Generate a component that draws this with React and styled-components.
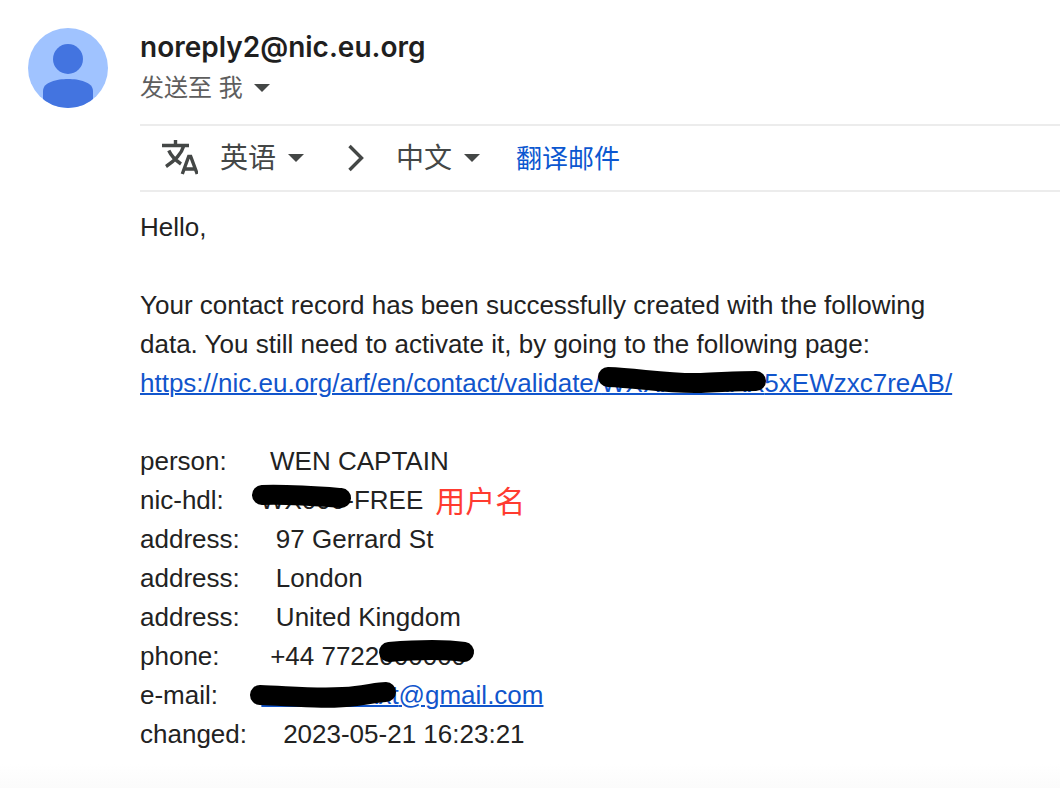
import React from "react";
import styled, { createGlobalStyle } from "styled-components";

const GlobalStyle = createGlobalStyle`
  * { box-sizing: border-box; }
  body {
    margin: 0;
    background: #fff;
    font-family: "Liberation Sans", "Noto Sans CJK SC", sans-serif;
  }
`;

const Message = styled.main`
  display: flex;
  gap: 32px;
  align-items: flex-start;
  min-height: 100vh;
  padding: 28px 0 32px 28px;
  background: linear-gradient(to top, #fbfbfb, #fff 24px);
`;

const Avatar = styled.svg`
  flex: none;
  width: 80px;
  height: 80px;
`;

const Content = styled.article`
  flex: 1;
  min-width: 0;
`;

const Header = styled.header`
  display: flex;
  flex-direction: column;
  align-items: flex-start;
  height: 96px;
`;

const Sender = styled.h1`
  margin: 0;
  font: 600 28px/38px Inter, sans-serif;
  color: #1f1f1f;
`;

const RecipientButton = styled.button`
  display: flex;
  align-items: center;
  gap: 11px;
  padding: 0;
  border: 0;
  background: none;
  color: #5e5e5e;
  font: 24px/44px "Liberation Sans", "Noto Sans CJK SC", sans-serif;
`;

const Caret = styled.svg`
  flex: none;
  width: 16px;
  height: 8px;
  fill: #444746;
`;

const TranslateBar = styled.section`
  display: flex;
  align-items: center;
  height: 68px;
  padding-left: 22px;
  border-top: 2px solid #ececec;
  border-bottom: 2px solid #ececec;
  color: #444746;
`;

const TranslateIcon = styled.svg`
  flex: none;
  width: 36px;
  height: 36px;
  margin-right: 22px;
`;

const Chevron = styled.svg`
  flex: none;
  width: 16px;
  height: 28px;
  margin: 0 32px 0 44px;
`;

const LanguageField = styled.label`
  display: flex;
  align-items: center;
  gap: 11px;
`;

const LanguageSelect = styled.select`
  appearance: none;
  padding: 0 0 4px;
  border: 0;
  background: none;
  color: inherit;
  font: 28px/40px "Noto Sans CJK SC", sans-serif;
`;

const TranslateButton = styled.button`
  margin-left: 36px;
  padding: 0 0 2px;
  border: 0;
  background: none;
  color: #0b57d0;
  font: 26px/40px "Noto Sans CJK SC", sans-serif;
`;

const Body = styled.div`
  padding-top: 16px;
  font-size: 26px;
  line-height: 39px;
  color: #222;
`;

const Paragraph = styled.p`
  max-width: 840px;
  margin: 0 0 39px;
`;

const Link = styled.a`
  color: #15c;
  text-decoration: underline;
  text-decoration-thickness: 2px;
`;

const Records = styled.dl`
  margin: 0;
`;

const Row = styled.div`
  white-space: pre;
`;

const Term = styled.dt`
  display: inline;
`;

const Value = styled.dd`
  display: inline;
  position: relative;
  margin: 0;
`;

const Hidden = styled.span`
  position: relative;
`;

const Scribble = styled.svg`
  position: absolute;
  left: 0;
  top: 0;
  overflow: visible;
  fill: none;
  stroke: #000;
  stroke-width: 20;
  stroke-linecap: round;
  stroke-linejoin: round;
`;

const Note = styled.span`
  position: absolute;
  left: 100%;
  top: -6px;
  margin-left: 12px;
  color: #ff3b30;
  font: 30px/40px "Noto Sans CJK SC", sans-serif;
`;

function DownCaret() {
  return (
    <Caret viewBox="0 0 16 8" aria-hidden="true">
      <path d="M0 0h16L8 8z" />
    </Caret>
  );
}

function Redacted({ text, d, width }) {
  return (
    <Hidden>
      {text}
      <Scribble width={width} height="30" aria-hidden="true">
        <path d={d} />
      </Scribble>
    </Hidden>
  );
}

function Language({ label, value }) {
  return (
    <LanguageField>
      <LanguageSelect aria-label={label} defaultValue={value}>
        <option>英语</option>
        <option>中文</option>
      </LanguageSelect>
      <DownCaret />
    </LanguageField>
  );
}

function Record({ name, gap, children }) {
  return (
    <Row>
      <Term>{name}:</Term>
      {" ".repeat(gap)}
      <Value>{children}</Value>
    </Row>
  );
}

export default function App() {
  return (
    <>
      <GlobalStyle />
      <Message>
        <Avatar viewBox="0 0 80 80" aria-hidden="true">
          <clipPath id="disc"><circle cx="40" cy="40" r="40" /></clipPath>
          <g clipPath="url(#disc)">
            <rect width="80" height="80" fill="#a0c3ff" />
            <circle cx="40" cy="31" r="15" fill="#4374e0" />
            <path d="M15 80V63C15 54 29 51 40 51S65 54 65 63V80Z" fill="#4374e0" />
          </g>
        </Avatar>
        <Content>
          <Header>
            <Sender>noreply2@nic.eu.org</Sender>
            <RecipientButton type="button">
              发送至 我
              <DownCaret />
            </RecipientButton>
          </Header>
          <TranslateBar>
            <TranslateIcon viewBox="0 0 36 36" fill="none" stroke="currentColor" strokeWidth="3.4" aria-hidden="true">
              <path d="M0 5.500H27M13.500 0V5.500M21.700 6C19.500 13.500 13 20.500 4 26.500M6.800 10.500C9 15.500 14 20.500 19 24" />
              <path d="M20.300 34 26.700 16.500H28.700L35.200 34M22.500 29H33" />
            </TranslateIcon>
            <Language label="源语言" value="英语" />
            <Chevron viewBox="0 0 16 28" fill="none" stroke="currentColor" strokeWidth="3.4" aria-hidden="true">
              <path d="M1.500 2 13.500 14 1.500 26" />
            </Chevron>
            <Language label="目标语言" value="中文" />
            <TranslateButton type="button">翻译邮件</TranslateButton>
          </TranslateBar>
          <Body>
            <Paragraph>Hello,</Paragraph>
            <Paragraph>
              Your contact record has been successfully created with the following
              data. You still need to activate it, by going to the following page:
              <br />
              <Link href="#validate">
                https://nic.eu.org/arf/en/contact/validate/
                <Redacted text="WXXXXXXXX" width={164} d="M7 9C38 10 65 16 100 15C125 14 140 13 155 13" />
                5xEWzxc7reAB/
              </Link>
            </Paragraph>
            <Records>
              <Record name="person" gap={6}>WEN CAPTAIN</Record>
              <Record name="nic-hdl" gap={5}>
                <Redacted text="WX000" width={90} d="M2 10C28 9 54 11 81 13" />
                -FREE
                <Note>用户名</Note>
              </Record>
              <Record name="address" gap={5}>97 Gerrard St</Record>
              <Record name="address" gap={5}>London</Record>
              <Record name="address" gap={5}>United Kingdom</Record>
              <Record name="phone" gap={7}>
                +44 7722
                <Redacted text="000000" width={90} d="M10 11C35 9 65 8 85 11" />
              </Record>
              <Record name="e-mail" gap={6}>
                <Link href="#mail">
                  <Redacted text="xxxxxxxxxxt" width={140} d="M-1 15C30 16 65 20 95 16C110 14 118 12 125 12" />
                  @gmail.com
                </Link>
              </Record>
              <Record name="changed" gap={5}>2023-05-21 16:23:21</Record>
            </Records>
          </Body>
        </Content>
      </Message>
    </>
  );
}
